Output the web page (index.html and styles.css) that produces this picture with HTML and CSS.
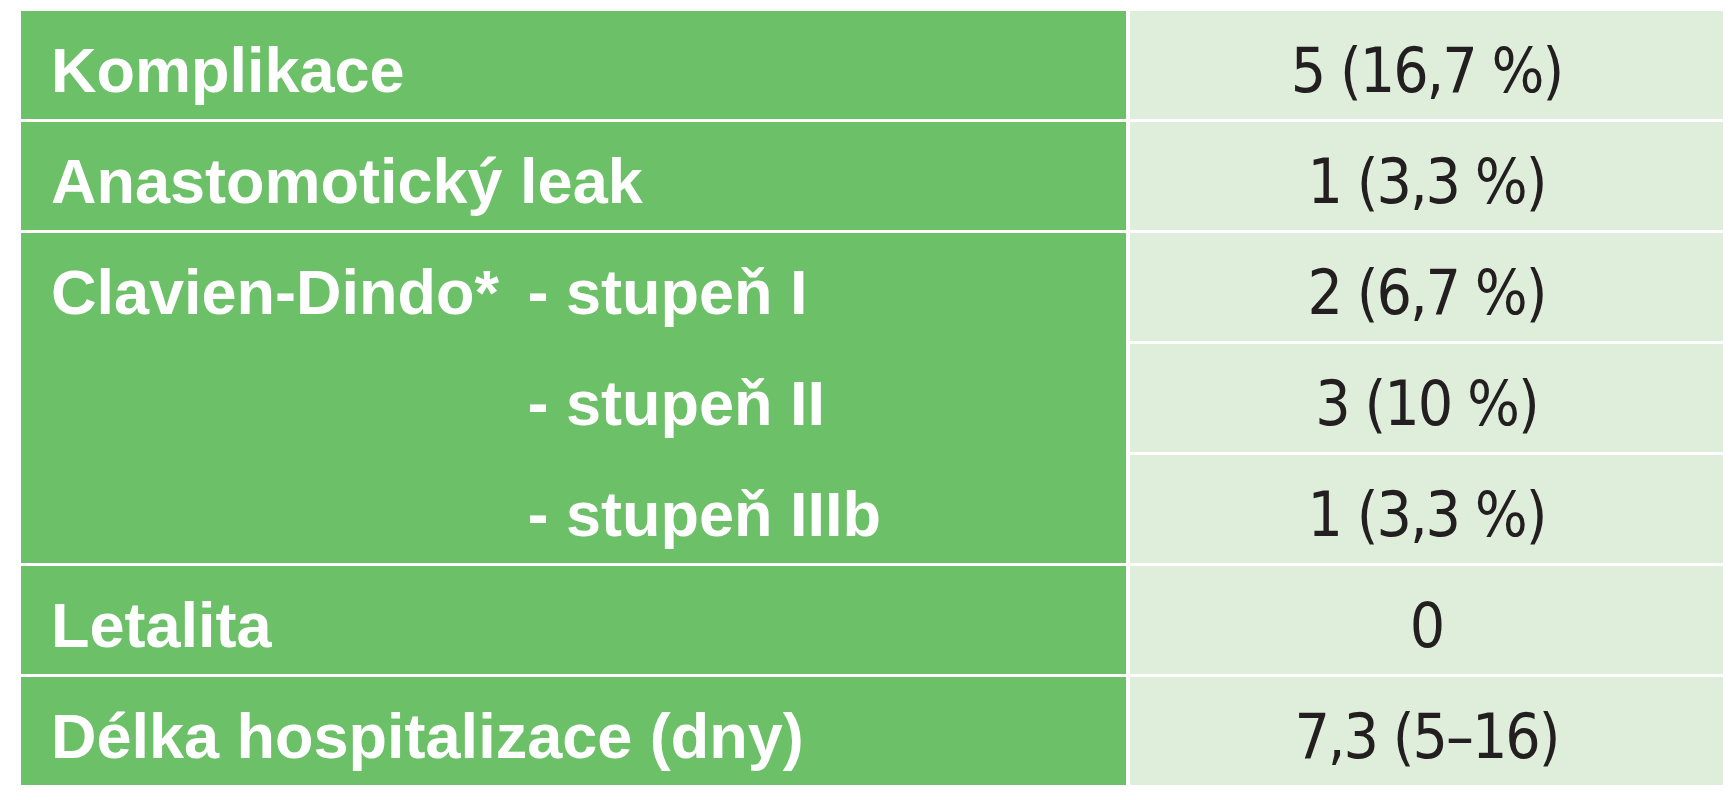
FILE: index.html
```html
<!DOCTYPE html>
<html lang="cs">
<head>
<meta charset="utf-8">
<title>Komplikace</title>
<link rel="stylesheet" href="styles.css">
</head>
<body>
<div class="table">
  <div class="label">Komplikace</div>
  <div class="value">5 (16,7 %)</div>

  <div class="label">Anastomotický leak</div>
  <div class="value">1 (3,3 %)</div>

  <div class="label group">
    <div class="group-name">Clavien-Dindo*&nbsp;</div>
    <div class="group-item">- stupeň I</div>
    <div class="group-item">- stupeň II</div>
    <div class="group-item">- stupeň IIIb</div>
  </div>
  <div class="value sub">2 (6,7 %)</div>
  <div class="value sub">3 (10 %)</div>
  <div class="value sub">1 (3,3 %)</div>

  <div class="label">Letalita</div>
  <div class="value">0</div>

  <div class="label">Délka hospitalizace (dny)</div>
  <div class="value">7,3 (5–16)</div>
</div>
</body>
</html>
```

FILE: styles.css
```css
html, body {
  margin: 0;
  padding: 0;
  background: #ffffff;
}

.table {
  display: grid;
  grid-template-columns: 1105px 593px;
  grid-auto-rows: 108px;
  column-gap: 4px;
  row-gap: 3px;
  margin: 11px 0 0 21px;
  width: 1702px;
}

.label {
  background: #6cc068;
  color: #ffffff;
  font-family: "Liberation Sans", Arial, sans-serif;
  font-weight: 700;
  font-size: 63px;
  display: flex;
  align-items: center;
  padding: 9px 0 0 30px;
  box-sizing: border-box;
  white-space: nowrap;
}

.value {
  position: relative;
  background: #dfeedb;
  color: #231f20;
  font-family: "DejaVu Sans Condensed", "Liberation Sans Narrow", "Liberation Sans", sans-serif;
  font-stretch: condensed;
  font-weight: 400;
  font-size: 62px;
  letter-spacing: -2px;
  display: flex;
  align-items: center;
  justify-content: center;
  padding-top: 10px;
  box-sizing: border-box;
  white-space: nowrap;
}

.value.sub + .value.sub::before {
  content: "";
  position: absolute;
  left: -4px;
  top: -3px;
  width: 4px;
  height: 3px;
  background: #ffffff;
}

.group {
  grid-row: span 3;
  display: grid;
  grid-template-columns: auto 1fr;
  grid-template-rows: repeat(3, 108px);
  row-gap: 3px;
  align-items: center;
  padding-top: 0;
}

.group-name,
.group-item {
  padding-top: 9px;
}

.group-name {
  grid-column: 1;
  grid-row: 1;
}

.group-item {
  grid-column: 2;
  padding-left: 11px;
}
```
